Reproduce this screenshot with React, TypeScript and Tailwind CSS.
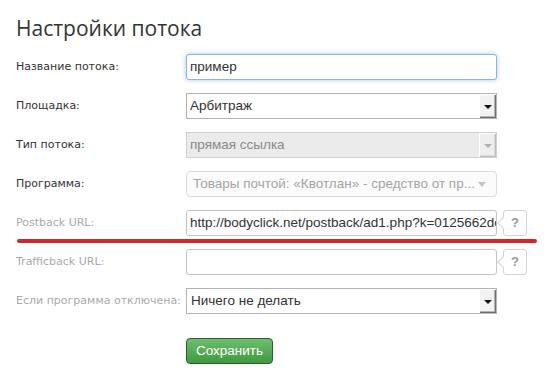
import React from 'react';

const label = 'text-[11px] leading-[26px] [font-family:"DejaVu_Sans",sans-serif]';
const field = 'h-[26px] w-[311px] [font-family:"Liberation_Sans",Arial,sans-serif] text-[13.5px]';

// Кнопка-стрелка старого стиля у выпадающего списка
const SelectArrow: React.FC<{ disabled?: boolean }> = ({ disabled }) => (
  <div
    className={`flex h-[24px] w-[17px] shrink-0 items-center justify-center border-l border-t border-white ${
      disabled ? 'bg-[#eeeeee] shadow-[inset_-1px_-1px_0_#bdbdbd,inset_-2px_-2px_0_#dcdcdc]' : 'bg-[#f2f2f2] shadow-[inset_-1px_-1px_0_#6f6f6f,inset_-2px_-2px_0_#b5b5b5]'
    }`}
  >
    <div
      className={`h-0 w-0 border-x-[4px] border-t-[4px] border-x-transparent ${
        disabled ? 'border-t-[#b0b0b0]' : 'border-t-[#111]'
      }`}
    />
  </div>
);

const HelpButton: React.FC = () => (
  <div className="relative ml-[6px] flex h-[26px] w-[24px] shrink-0 items-center justify-center rounded-[3px] border border-[#d4d4d4] bg-white text-[13px] font-bold text-[#999] [font-family:'Liberation_Sans',Arial,sans-serif]">
    <div className="absolute left-[-5px] top-[8px] h-[8px] w-[8px] rotate-45 border-b border-l border-[#d4d4d4] bg-white" />
    <span className="relative">?</span>
  </div>
);

export default function App() {
  return (
    <div className="min-h-[381px] w-[553px] bg-white pl-[16px] pt-[14px] text-[#333]">
      <h1 className="mb-[12px] text-[21px] leading-[28px] text-[#333] [font-family:'Open_Sans',sans-serif]">
        Настройки потока
      </h1>

      <div className="grid grid-cols-[170px_1fr] gap-y-[13px]">
        <div className={label}>Название потока:</div>
        <div>
          <div className={`${field} flex items-center rounded-[3px] border border-[#8fb4d9] bg-white pl-[3px] text-[#333] shadow-[0_0_5px_rgba(100,160,220,0.55)]`}>
            пример
          </div>
        </div>

        <div className={label}>Площадка:</div>
        <div className={`${field} flex items-center justify-between border border-[#b4b4b4] bg-white pl-[3px] text-[#333]`}>
          <span>Арбитраж</span>
          <SelectArrow />
        </div>

        <div className={label}>Тип потока:</div>
        <div className={`${field} flex items-center justify-between border border-[#d0d0d0] bg-[#ebebeb] pl-[3px] text-[#8a8a8a]`}>
          <span>прямая ссылка</span>
          <SelectArrow disabled />
        </div>

        <div className={label}>Программа:</div>
        <div className={`${field} flex items-center justify-between whitespace-nowrap rounded-[4px] border border-[#dcdcdc] bg-[#fbfbfb] pl-[6px] pr-[10px] text-[#a5a5a5]`}>
          <span>Товары почтой: «Квотлан» - средство от пр...</span>
          <div className="h-0 w-0 shrink-0 border-x-[4px] border-t-[5px] border-x-transparent border-t-[#c4c4c4]" />
        </div>

        <div className={`${label} text-[#aaa]`}>Postback URL:</div>
        <div className="relative flex">
          <div className={`${field} flex items-center overflow-hidden whitespace-nowrap rounded-[3px] border border-[#c4c4c4] bg-white pl-[3px] text-[#333]`}>
            <span className="shrink-0">http://bodyclick.net/postback/ad1.php?k=0125662dc3</span>
          </div>
          <HelpButton />
          <div className="absolute left-[-169px] top-[29px] h-[4px] w-[520px] rounded-full bg-[#d0272f]" />
        </div>

        <div className={`${label} text-[#aaa]`}>Trafficback URL:</div>
        <div className="flex">
          <div className={`${field} rounded-[3px] border border-[#c4c4c4] bg-white`} />
          <HelpButton />
        </div>

        <div className={`${label} text-[#aaa]`}>Если программа отключена:</div>
        <div className={`${field} flex items-center justify-between border border-[#b4b4b4] bg-white pl-[4px] text-[#333]`}>
          <span>Ничего не делать</span>
          <SelectArrow />
        </div>

        <div />
        <div className="pt-[10px]">
          <button className="h-[26px] rounded-[4px] border border-[#2e5e2e] bg-gradient-to-b from-[#6cc06c] to-[#3f9a3f] px-[9px] text-[13.5px] text-white [font-family:'Liberation_Sans',Arial,sans-serif]">
            Сохранить
          </button>
        </div>
      </div>
    </div>
  );
}
